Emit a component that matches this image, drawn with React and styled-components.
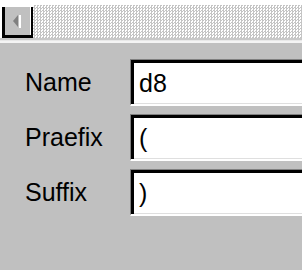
import React from "react";
import styled, { createGlobalStyle } from "styled-components";

const Global = createGlobalStyle`
  html, body { margin: 0; padding: 0; }
  body {
    width: 302px;
    height: 270px;
    overflow: hidden;
    background: #c0c0c0;
    font-family: "Liberation Sans", Arial, sans-serif;
  }
`;

const Window = styled.div`
  width: 302px;
  height: 270px;
  display: flex;
  flex-direction: column;
  background: #c0c0c0;
  overflow: hidden;
`;

const TopStrip = styled.div`
  height: 5px;
  background: #fff;
`;

const ScrollBar = styled.div`
  height: 33px;
  display: flex;
  background: #fff;
`;

const ScrollButton = styled.div`
  width: 31px;
  margin-left: 2px;
  margin-top: 2px;
  box-sizing: border-box;
  border-left: 3px solid #000;
  border-bottom: 3px solid #000;
  border-right: 2px solid #000;
  background: #c0c0c0;
  box-shadow: inset -1px 0 0 #fff;
  display: flex;
  align-items: center;
  justify-content: center;
`;

const Track = styled.div`
  flex: 1;
  background-color: #fff;
  background-image: repeating-conic-gradient(#c4c4c4 0 25%, #ffffff 0 50%);
  background-size: 3px 3px;
`;

const Separator = styled.div`
  height: 5px;
  box-sizing: border-box;
  border-top: 2px solid #c8c8c8;
  border-bottom: 2px solid #f4f4f4;
  background: #e8e8e8;
`;

const Form = styled.div`
  display: grid;
  grid-template-columns: 130px 1fr;
  row-gap: 8px;
  padding-top: 16px;
`;

const Label = styled.div`
  font-size: 25px;
  color: #000;
  padding-left: 25px;
  display: flex;
  align-items: center;
`;

const Field = styled.div`
  height: 47px;
  width: 200px;
  box-sizing: border-box;
  background: #fff;
  border-style: solid;
  border-width: 1px 0 2px 1px;
  border-color: #808080 #fff #fff #808080;
  box-shadow: inset 3px 3px 0 #000, inset 0 -1px 0 #dfdfdf;
  font-size: 25px;
  color: #000;
  display: flex;
  align-items: center;
  padding: 3px 0 0 8px;
`;

const rows = [
  { label: "Name", value: "d8" },
  { label: "Praefix", value: "(" },
  { label: "Suffix", value: ")" },
];

export default function App() {
  return (
    <>
      <Global />
      <Window>
        <TopStrip />
        <ScrollBar>
          <ScrollButton>
            <svg width="12" height="14" viewBox="0 0 12 14">
              <polygon points="1,7 6,1 6,13" fill="#808080" />
              <rect x="7" y="1" width="2" height="13" fill="#fff" />
            </svg>
          </ScrollButton>
          <Track />
        </ScrollBar>
        <Separator />
        <Form>
          {rows.map((r) => (
            <React.Fragment key={r.label}>
              <Label>{r.label}</Label>
              <Field>{r.value}</Field>
            </React.Fragment>
          ))}
        </Form>
      </Window>
    </>
  );
}
